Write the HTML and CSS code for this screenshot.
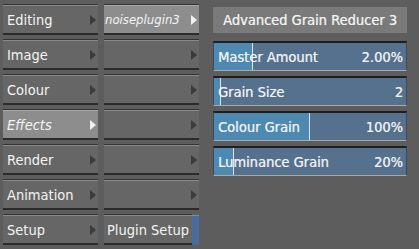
FILE: index.html
```html
<!DOCTYPE html>
<html lang="en">
<head>
    <meta charset="UTF-8">
    <title>Advanced Grain Reducer 3</title>
    <link rel="stylesheet" href="styles.css">
</head>
<body>
    <div class="app">
        <div class="column">
            <button class="menu-btn">Editing <span class="arrow"></span></button>
            <button class="menu-btn">Image <span class="arrow"></span></button>
            <button class="menu-btn">Colour <span class="arrow"></span></button>
            <button class="menu-btn active"><i>Effects</i> <span class="arrow"></span></button>
            <button class="menu-btn">Render <span class="arrow"></span></button>
            <button class="menu-btn">Animation <span class="arrow"></span></button>
            <button class="menu-btn">Setup <span class="arrow"></span></button>
        </div>

        <div class="column">
            <button class="menu-btn active plugin"><i>noiseplugin3</i> <span class="arrow"></span></button>
            <button class="menu-btn"><span></span><span class="arrow"></span></button>
            <button class="menu-btn"><span></span><span class="arrow"></span></button>
            <button class="menu-btn"><span></span><span class="arrow"></span></button>
            <button class="menu-btn"><span></span><span class="arrow"></span></button>
            <button class="menu-btn"><span></span><span class="arrow"></span></button>
            <div class="setup-row">
                <button class="menu-btn setup-btn">Plugin Setup</button>
                <div class="setup-strip"></div>
            </div>
        </div>

        <div class="panel">
            <div class="panel-title">Advanced Grain Reducer 3</div>
            <div class="slider" style="--fill: 20%"><span>Master Amount</span><span>2.00%</span></div>
            <div class="slider" style="--fill: 3%"><span>Grain Size</span><span>2</span></div>
            <div class="slider" style="--fill: 49.5%"><span>Colour Grain</span><span>100%</span></div>
            <div class="slider" style="--fill: 10%"><span>Luminance Grain</span><span>20%</span></div>
        </div>
    </div>
</body>
</html>
```

FILE: styles.css
```css
:root {
    --bg: #5d5d5d;
    --face: #666666;
    --face-active: #8d8d8d;
    --title: #7a7a7a;
    --track: #56718e;
    --fill-color: #4d89b0;
    --text: #f4f4f4;
}

body {
    margin: 0;
    background: var(--bg);
    color: var(--text);
    font-family: 'DejaVu Sans Condensed', 'DejaVu Sans', sans-serif;
    font-size: 14.5px;
    text-shadow: 0.5px 0 0 rgba(255, 255, 255, 0.55);
    width: 419px;
    height: 249px;
    overflow: hidden;
}

.app {
    display: grid;
    grid-template-columns: 95px 95px 202px;
    column-gap: 6px;
    padding: 5px 0 0 3px;
}

.panel {
    margin-left: 8px;
    padding-top: 2px;
    display: flex;
    flex-direction: column;
    gap: 5px;
}

.column {
    display: flex;
    flex-direction: column;
    gap: 5px;
}

.menu-btn {
    height: 30px;
    box-sizing: border-box;
    margin: 0;
    padding: 0 2px 0 4px;
    display: flex;
    align-items: center;
    justify-content: space-between;
    background: var(--face);
    color: var(--text);
    font: inherit;
    border: none;
    border-top: 1px solid #8a8a8a;
    border-bottom: 2px solid #2b2b2b;
    box-shadow: 0 -1px 0 #333333;
    text-align: left;
    white-space: nowrap;
}

.menu-btn.active {
    background: var(--face-active);
    border-top-color: #a8a8a8;
}

.menu-btn.plugin {
    padding-left: 1px;
    font-size: 13px;
}

.arrow {
    width: 0;
    height: 0;
    border-left: 6px solid #3b3b3b;
    border-top: 5px solid transparent;
    border-bottom: 5px solid transparent;
}

.active .arrow {
    border-left-color: #f2f2f2;
}

.setup-row {
    display: flex;
    height: 30px;
}

.setup-btn {
    flex: 1;
    padding-left: 3px;
}

.setup-strip {
    width: 7px;
    background: #4a6c9c;
    border-top: 1px solid #6d8db8;
}

.panel-title {
    height: 26px;
    margin-bottom: 3px;
    display: flex;
    align-items: center;
    justify-content: center;
    background: var(--title);
}

.slider {
    height: 30px;
    box-sizing: border-box;
    display: flex;
    align-items: center;
    justify-content: space-between;
    padding: 0 3px 0 4px;
    border-top: 2px solid #1e1e1e;
    border-bottom: 1px solid #a9a9a9;
    border-left: 1px solid #3c4a59;
    border-right: 1px solid #3c4a59;
    background: linear-gradient(to right,
        var(--fill-color) 0 var(--fill),
        #d8e4ee var(--fill) calc(var(--fill) + 1px),
        var(--track) calc(var(--fill) + 1px) 100%);
}
```
